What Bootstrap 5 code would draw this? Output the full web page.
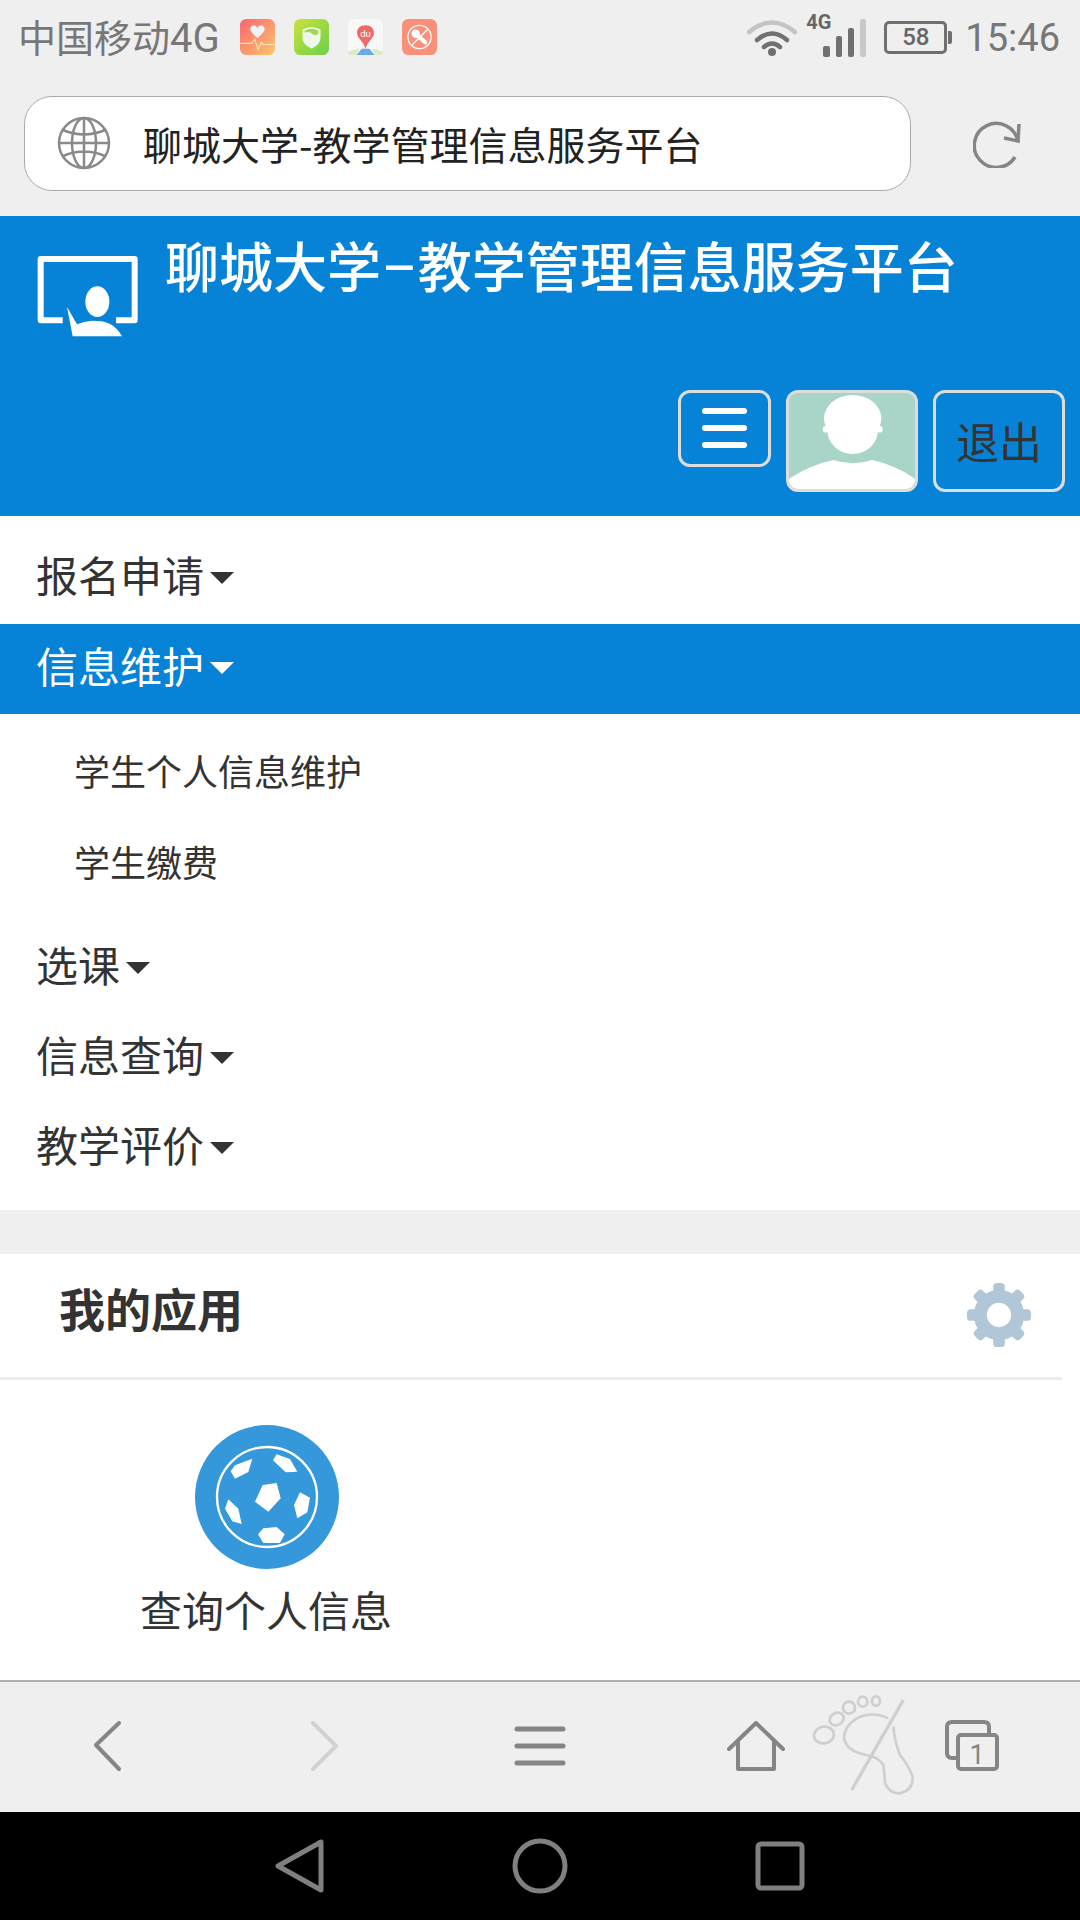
<!DOCTYPE html>
<html lang="zh-CN">

<head>
    <meta charset="UTF-8">
    <meta name="viewport" content="width=device-width, initial-scale=1.0">
    <title>聊城大学-教学管理信息服务平台</title>
    <link rel="stylesheet" href="https://cdn.jsdelivr.net/npm/bootstrap@5.3.0/dist/css/bootstrap.min.css">
    <style>
        html, body { margin: 0; background: #fff; }
        body { font-family: "Noto Sans CJK SC", "Liberation Sans", sans-serif; color: #333; }
        svg { display: block; flex: none; }
        .phone { width: 1080px; height: 1920px; overflow: hidden; }
        .status-bar { height: 80px; background: #efefef; color: #777; padding: 0 20px 4px 18px; }
        .carrier { font-size: 38px; line-height: 1; margin-right: 20px; }
        .carrier span { font-family: Roboto, sans-serif; font-size: 40px; }
        .app-icons { gap: 19px; margin-top: -2px; }
        .net-4g { font: 700 20px/1 Roboto, sans-serif; color: #666; position: absolute; left: -16px; top: -7px; }
        .signal-wrap { position: relative; margin-left: 25px; }
        .batt { width: 63px; height: 33px; border: 3px solid #707070; border-radius: 5px; margin-left: 18px; color: #666;
            font: 500 24px/27px Roboto, sans-serif; text-align: center; position: relative; }
        .batt::after { content: ""; position: absolute; right: -8px; top: 7px; width: 4px; height: 13px; background: #707070; border-radius: 0 2px 2px 0; }
        .clock { font: 400 38px/1 Roboto, sans-serif; color: #777; margin-left: 18px; margin-right: 0; }
        .addr-row { height: 136px; background: #efefef; padding: 16px 0 25px 24px; }
        .addr-box { width: 887px; height: 95px; background: #fff; border: 1px solid #aaa; border-radius: 28px; padding-left: 32px; gap: 32px;
            font-size: 39px; color: #222; }
        .addr-box span { margin-top: -1px; }
        .addr-reload { margin-left: 62px; margin-top: 22px; }
        .top-head { height: 300px; background: #0683d6; padding: 16px 15px 24px 36px; }
        .head-title { color: #fff; font-size: 54px; font-weight: 500; line-height: 70px; margin-left: 27px; white-space: nowrap; margin-top: -2px; }
        .title-dash { margin: 0 3px; }
        .head-logo { margin-top: 23px; }
        .head-btn { border: 3px solid #ddd; border-radius: 12px; background: transparent; padding: 0; }
        .head-btns { gap: 15px; }
        .btn-menu { width: 93px; height: 77px; gap: 11px; }
        .btn-menu i { display: block; width: 45px; height: 6px; background: #fff; border-radius: 3px; }
        .btn-avatar { width: 132px; height: 102px; overflow: hidden; background: #a9d5c8; }
        .btn-exit { width: 132px; height: 102px; font-size: 43px; color: #333; }
        .menu-list { background: #fff; padding-bottom: 21px; }
        .menu-row { font-size: 42px; color: #333; padding-left: 36px; height: 90px; }
        .menu-row.first-row { height: 108px; padding-top: 8px; }
        .menu-row.on { background: #0683d6; color: #fff; padding-bottom: 9px; }
        .caret-down { width: 0; height: 0; border-left: 12px solid transparent; border-right: 12px solid transparent; border-top: 12px solid currentColor; margin-left: 6px; margin-top: 8px; }
        .sub-list { padding: 14px 0 9px; }
        .sub-row { font-size: 36px; color: #333; padding-left: 74px; height: 91px; padding-bottom: 7px; }
        .gap-band { height: 44px; background: #efefef; }
        .app-panel { height: 427px; background: #fff; }
        .app-head { height: 126px; margin-right: 18px; border-bottom: 3px solid #ececec; padding: 0 30px 0 59px; }
        .app-head h5 { font-size: 46px; font-weight: 700; color: #333; margin: 0 0 15px; }
        .app-tile { width: 252px; margin-left: 140px; padding-top: 45px; }
        .app-tile svg { margin-left: 2px; }
        .app-tile span { font-size: 42px; line-height: 1; color: #333; margin-top: 19px; white-space: nowrap; }
        .tool-bar { height: 132px; background: #efefef; border-top: 2px solid #b0b0b0; padding-bottom: 3px; position: relative; display: grid; grid-template-columns: repeat(5, 216px); }
        .foot-mark { position: absolute; left: 812px; top: 13px; }
        .nav-bar { height: 108px; background: #000; }
        .nav-bar > div { width: 240px; }
    </style>
</head>

<body>
    <div class="phone d-flex flex-column">
        <div class="status-bar d-flex align-items-center">
            <div class="carrier">中国移动<span>4G</span></div>
            <div class="app-icons d-flex">
                <svg width="35" height="36" viewBox="0 0 33 34">
                    <defs><linearGradient id="g1" x1="0" y1="0" x2="1" y2="1"><stop offset="0" stop-color="#fb6470"/><stop offset="1" stop-color="#fdc76a"/></linearGradient></defs>
                    <rect width="33" height="34" rx="6" fill="url(#g1)"/>
                    <path d="M23 8c-2-3-6-2-6.500 1-.5-3-4.500-4-6.500-1-1.500 3 3 7 6.500 10 3.500-3 8-7 6.500-10z" fill="#eef3f5"/>
                    <path d="M0 23h11l3-4 3 10 3-7 2 2h11" fill="none" stroke="#f7e3c0" stroke-width="1"/>
                </svg>
                <svg width="35" height="36" viewBox="0 0 33 34">
                    <defs><linearGradient id="g2" x1="0" y1="0" x2="1" y2="1"><stop offset="0" stop-color="#cbe23a"/><stop offset="1" stop-color="#6cd04a"/></linearGradient></defs>
                    <rect width="33" height="34" rx="6" fill="url(#g2)"/>
                    <path d="M8 10q8-5 17 0v8q0 6-8.500 10Q8 24 8 18z" fill="#eef7ee"/>
                    <path d="M10 11q7-3.500 13 0v3q-4 3-7-1-3-1.500-6 0z" fill="#a7d84b"/>
                </svg>
                <svg width="35" height="36" viewBox="0 0 33 34">
                    <rect width="33" height="34" rx="6" fill="#f8f8f8"/>
                    <path d="M0 31q6-3 11-3l-3 6H3q-3 0-3-3zM33 31q-6-3-11-3l3 6h5q3 0 3-3z" fill="#d8edc4"/>
                    <path d="M13 28h7l5 6H8z" fill="#6aa9ee"/>
                    <path d="M16.500 6c-5 0-8 3-8 7 0 5 6 8 8 15 2-7 8-10 8-15 0-4-3-7-8-7z" fill="#ee6a66"/>
                    <text x="16.500" y="17" text-anchor="middle" font-family="Roboto, sans-serif" font-size="9" fill="#fff">du</text>
                </svg>
                <svg width="35" height="36" viewBox="0 0 33 34">
                    <rect width="33" height="34" rx="6" fill="#fb907a"/>
                    <circle cx="16.500" cy="17" r="11" fill="none" stroke="#fff" stroke-width="1.200"/>
                    <path d="M9 25 25 9" stroke="#fff" stroke-width="1.200"/>
                    <circle cx="13" cy="14" r="4" fill="#fff"/>
                    <path d="M14 15l8 7" stroke="#fff" stroke-width="4" stroke-linecap="round"/>
                </svg>
            </div>
            <div class="ms-auto d-flex align-items-center">
                <svg width="50" height="38" viewBox="0 0 50 38">
                    <path d="M2 13Q25-6 48 13" fill="none" stroke="#c4c4c4" stroke-width="4.500" stroke-linecap="round"/>
                    <path d="M10 21Q25 8 40 21" fill="none" stroke="#707070" stroke-width="4.500" stroke-linecap="round"/>
                    <path d="M17 28Q25 21 33 28" fill="none" stroke="#707070" stroke-width="4.500" stroke-linecap="round"/>
                    <circle cx="25" cy="33" r="4" fill="#707070"/>
                </svg>
                <div class="signal-wrap">
                    <span class="net-4g">4G</span>
                    <svg width="44" height="38" viewBox="0 0 44 38">
                        <rect x="1" y="27" width="7" height="11" rx="2" fill="#707070"/>
                        <rect x="14" y="17" width="6" height="21" rx="2" fill="#707070"/>
                        <rect x="26" y="9" width="6" height="29" rx="2" fill="#707070"/>
                        <rect x="38" y="0" width="6" height="38" rx="2" fill="#c8c8c8"/>
                    </svg>
                </div>
                <div class="batt">58</div>
                <div class="clock">15:46</div>
            </div>
        </div>

        <div class="addr-row d-flex align-items-start">
            <div class="addr-box d-flex align-items-center">
                <svg width="54" height="54" viewBox="0 0 54 54" fill="none" stroke="#8a8a8a" stroke-width="2.500">
                    <circle cx="27" cy="27" r="25"/>
                    <ellipse cx="27" cy="27" rx="12" ry="25"/>
                    <path d="M27 2v50M2 27h50M6 14q21 9 42 0M6 40q21-9 42 0"/>
                </svg>
                <span>聊城大学-教学管理信息服务平台</span>
            </div>
            <svg class="addr-reload" width="50" height="50" viewBox="0 0 50 50" fill="none" stroke="#858585" stroke-width="3.500">
                <path d="M45 24a22 22 0 1 0-3 15"/>
                <path d="M46 6l-1 17-14-3"/>
            </svg>
        </div>

        <div class="top-head d-flex flex-column">
            <div class="d-flex align-items-start">
                <svg class="head-logo" width="102" height="84" viewBox="105 102 300 252">
                    <path d="M182 298H116V114H398V298H342" fill="none" stroke="#fff" stroke-width="18" stroke-linejoin="round"/>
                    <ellipse cx="286" cy="242" rx="36" ry="46" fill="#fff"/>
                    <path d="M195 258l30 52q30-14 60-10 50 0 75 46H212z" fill="#fff"/>
                </svg>
                <div class="head-title">聊城大学<span class="title-dash">−</span>教学管理信息服务平台</div>
            </div>
            <div class="head-btns d-flex justify-content-end align-items-start mt-auto">
                <button class="head-btn btn-menu d-flex flex-column justify-content-center align-items-center">
                    <i></i><i></i><i></i>
                </button>
                <div class="head-btn btn-avatar">
                    <svg width="126" height="96" viewBox="447 99 378 288">
                        <rect x="447" y="99" width="378" height="288" fill="#a9d5c8"/>
                        <ellipse cx="638" cy="175" rx="86" ry="70" fill="#fff"/>
                        <ellipse cx="638" cy="210" rx="76" ry="72" fill="#fff"/>
                        <ellipse cx="557" cy="208" rx="9" ry="10" fill="#fff"/>
                        <ellipse cx="719" cy="208" rx="9" ry="10" fill="#fff"/>
                        <path d="M447 356Q510 315 580 300q58 20 116 0 70 15 129 56v31H447z" fill="#fff"/>
                    </svg>
                </div>
                <button class="head-btn btn-exit">退出</button>
            </div>
        </div>

        <div class="menu-list">
            <div class="menu-row first-row d-flex align-items-center">报名申请<span class="caret-down"></span></div>
            <div class="menu-row on d-flex align-items-center">信息维护<span class="caret-down"></span></div>
            <div class="sub-list">
                <div class="sub-row d-flex align-items-center">学生个人信息维护</div>
                <div class="sub-row d-flex align-items-center">学生缴费</div>
            </div>
            <div class="menu-row d-flex align-items-center">选课<span class="caret-down"></span></div>
            <div class="menu-row d-flex align-items-center">信息查询<span class="caret-down"></span></div>
            <div class="menu-row d-flex align-items-center">教学评价<span class="caret-down"></span></div>
        </div>

        <div class="gap-band"></div>

        <div class="app-panel">
            <div class="app-head d-flex align-items-center justify-content-between">
                <h5>我的应用</h5>
                <svg width="66" height="66" viewBox="0 0 68 68" fill="#b1c6d6">
                    <rect x="28" y="1" width="12" height="66" rx="4"/>
                    <rect x="28" y="1" width="12" height="66" rx="4" transform="rotate(45 34 34)"/>
                    <rect x="28" y="1" width="12" height="66" rx="4" transform="rotate(90 34 34)"/>
                    <rect x="28" y="1" width="12" height="66" rx="4" transform="rotate(135 34 34)"/>
                    <circle cx="34" cy="34" r="26"/>
                    <circle cx="34" cy="34" r="12.500" fill="#fff"/>
                </svg>
            </div>
            <div class="app-tile d-flex flex-column align-items-center">
                <svg width="144" height="144" viewBox="225 75 432 432">
                    <circle cx="441" cy="291" r="216" fill="#3498db"/>
                    <circle cx="441" cy="291" r="150" fill="none" stroke="#fff" stroke-width="7"/>
                    <g fill="#fff">
                        <path d="M428 255l42-6 12 46-37 40-40-30z"/>
                        <path d="M345 196l52-20-12 40-40 20-13-22z"/>
                        <path d="M470 163l40 14 22 38-35 2-38-36z"/>
                        <path d="M540 277l30 16-8 44-30 18-10-40z"/>
                        <path d="M325 298l30 28 10 46-28-8-22-38z"/>
                        <path d="M430 385l40-4 24 22-14 26h-50l-16-26z"/>
                    </g>
                </svg>
                <span>查询个人信息</span>
            </div>
        </div>

        <div class="tool-bar">
            <div class="d-flex align-items-center justify-content-center">
                <svg width="30" height="52" viewBox="0 0 30 52" fill="none" stroke="#858585" stroke-width="4" stroke-linecap="round" stroke-linejoin="round"><path d="M26 3 3 25l23 24"/></svg>
            </div>
            <div class="d-flex align-items-center justify-content-center">
                <svg width="30" height="52" viewBox="0 0 30 52" fill="none" stroke="#d2d2d2" stroke-width="4" stroke-linecap="round" stroke-linejoin="round"><path d="M4 3l23 23L4 49"/></svg>
            </div>
            <div class="d-flex align-items-center justify-content-center">
                <svg width="52" height="40" viewBox="0 0 52 40" stroke="#858585" stroke-width="5" stroke-linecap="round"><path d="M3 3h46M3 20h46M3 37h46"/></svg>
            </div>
            <div class="d-flex align-items-center justify-content-center">
                <svg width="58" height="50" viewBox="0 0 58 50" fill="none" stroke="#858585" stroke-width="4" stroke-linecap="round" stroke-linejoin="round"><path d="M2 28 29 2l27 26M11 20v28h36V20"/></svg>
            </div>
            <div class="d-flex align-items-center justify-content-center">
                <svg width="56" height="52" viewBox="0 0 56 52">
                    <path d="M13 38H8q-5 0-5-5V7q0-5 5-5h32q5 0 5 5v6" fill="none" stroke="#858585" stroke-width="4"/>
                    <rect x="14" y="15" width="39" height="34" rx="3" fill="none" stroke="#858585" stroke-width="4"/>
                    <text x="33" y="44" text-anchor="middle" font-family="Roboto, sans-serif" font-size="27" fill="#858585">1</text>
                </svg>
            </div>
            <svg class="foot-mark" width="104" height="102" viewBox="336 75 312 306" fill="none" stroke="#cfcfcf" stroke-width="8">
                <ellipse cx="372" cy="195" rx="30" ry="25" transform="rotate(-10 372 195)"/>
                <ellipse cx="410" cy="147" rx="22" ry="18" transform="rotate(-30 410 147)"/>
                <ellipse cx="447" cy="113" rx="18" ry="18"/>
                <ellipse cx="488" cy="95" rx="14" ry="15"/>
                <ellipse cx="528" cy="93" rx="12" ry="14"/>
                <path d="M565 145Q525 125 480 140 432 165 432 205 440 245 500 255 535 260 550 285 555 320 555 340 570 372 600 370 640 360 638 320 625 285 600 255 585 220 580 170"/>
                <path d="M610 90 455 360" stroke-width="10"/>
            </svg>
        </div>

        <div class="nav-bar d-flex justify-content-center align-items-center">
            <div class="d-flex justify-content-center">
                <svg width="50" height="56" viewBox="0 0 50 56" fill="none" stroke="#808080" stroke-width="5" stroke-linejoin="round"><path d="M46 4v48L3 28z"/></svg>
            </div>
            <div class="d-flex justify-content-center">
                <svg width="56" height="56" viewBox="0 0 56 56" fill="none" stroke="#808080" stroke-width="5"><circle cx="28" cy="28" r="25"/></svg>
            </div>
            <div class="d-flex justify-content-center">
                <svg width="50" height="50" viewBox="0 0 50 50" fill="none" stroke="#808080" stroke-width="5" stroke-linejoin="round"><rect x="3" y="3" width="44" height="44" rx="3"/></svg>
            </div>
        </div>
    </div>

    <script src="https://cdn.jsdelivr.net/npm/bootstrap@5.3.0/dist/js/bootstrap.bundle.min.js"></script>
</body>

</html>
